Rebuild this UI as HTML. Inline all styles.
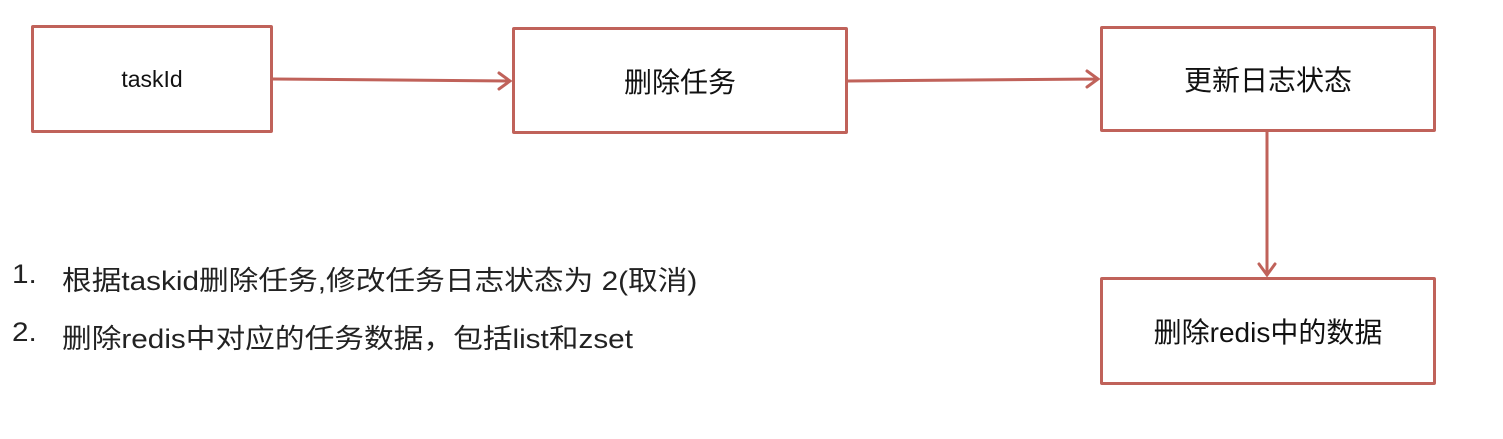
<!DOCTYPE html>
<html><head><meta charset="utf-8"><style>
body{margin:0;width:1503px;height:439px;background:#fff;position:relative;overflow:hidden;font-family:"Liberation Sans","Noto Sans CJK SC",sans-serif;color:#111}
.b{position:absolute;border:3px solid #c0625a;border-radius:2px;box-sizing:border-box;display:flex;align-items:center;justify-content:center;font-size:28px}
.t{position:absolute;font-size:27px;white-space:nowrap;color:#222;transform-origin:0 50%;transform:scaleX(1.1)}
</style></head><body>
<div class="b" style="left:31px;top:25px;width:242px;height:108px;font-size:23px">taskId</div>
<div class="b" style="left:512px;top:27px;width:336px;height:107px">删除任务</div>
<div class="b" style="left:1100px;top:26px;width:336px;height:106px">更新日志状态</div>
<div class="b" style="left:1100px;top:277px;width:336px;height:108px">删除redis中的数据</div>
<svg width="1503" height="439" style="position:absolute;left:0;top:0">
<g stroke="#c0625a" stroke-width="3" fill="none" stroke-linecap="round">
<path d="M273 79 L510 81 M499 73 L510 81 L499 89"/>
<path d="M848 81 L1098 79 M1087 71 L1098 79 L1087 87"/>
<path d="M1267 132 L1267 275 M1259 264 L1267 275 L1275 264"/>
</g></svg>
<div class="t" style="left:12px;top:259px">1.</div>
<div class="t" style="left:62px;top:259px">根据taskid删除任务,修改任务日志状态为 2(取消)</div>
<div class="t" style="left:12px;top:317px">2.</div>
<div class="t" style="left:62px;top:317px">删除redis中对应的任务数据，包括list和zset</div>
</body></html>
